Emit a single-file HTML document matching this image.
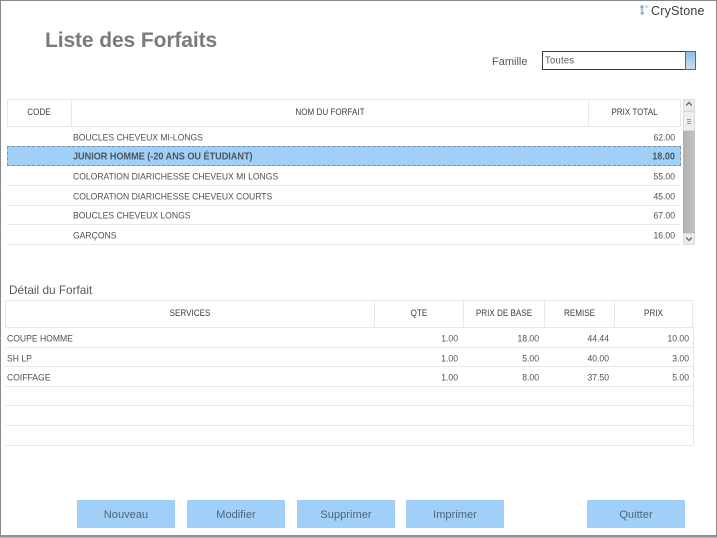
<!DOCTYPE html>
<html lang="fr"><head><meta charset="utf-8"><title>Liste des Forfaits</title>
<style>
html,body{margin:0;padding:0;background:#fff}
#p{position:relative;width:717px;height:538px;overflow:hidden;background:#fff;font-family:"Liberation Sans",sans-serif;color:#505050;filter:blur(.3px)}
#p div{position:absolute;box-sizing:border-box}
.t{white-space:nowrap;font-size:8.6px;line-height:14px;height:14px;transform:scaleY(1.1)}
.r{text-align:right}
.c{text-align:center}
.h{color:#3c3c3c;font-size:8.1px}
.l{background:#e8e8e8;height:1px}
.v{background:#e8e8e8;width:1px}
.b{background:#a0d0f8;height:28px;width:98px;top:500px;text-align:center;line-height:30px;font-size:11px;color:#4f6478;letter-spacing:.05px}
</style></head><body><div id="p">
<div style="left:0;top:0;width:717px;height:537px;border:1px solid #8a8a8a;border-bottom:2px solid #8f8f8f"></div>
<div style="left:0;top:537px;width:717px;height:1px;background:#b8b8b8"></div>

<div style="left:45px;top:28px;font-size:21px;line-height:26px;font-weight:bold;color:#7b7b7b;white-space:nowrap;letter-spacing:-.1px">Liste des Forfaits</div>

<div style="left:640px;top:5px;width:9px;height:10px">
<svg width="9" height="10" viewBox="0 0 9 10" style="display:block"><circle cx="2" cy="2" r="1.7" fill="#8fa9bd"/><circle cx="6.6" cy="1.8" r="1.4" fill="#c0d4e2"/><circle cx="2" cy="5" r="1.4" fill="#b6cbdc"/><circle cx="2.2" cy="8" r="1.6" fill="#8fa9bd"/></svg></div>
<div style="left:651px;top:4px;font-size:12.5px;line-height:15px;color:#3a3a3a;white-space:nowrap;letter-spacing:.2px">CryStone</div>

<div style="left:492px;top:55px;font-size:11px;line-height:14px;color:#555;white-space:nowrap">Famille</div>
<div style="left:542px;top:51px;width:154px;height:19px;border:1px solid #3c3c3c;background:#fff"></div>
<div class="t" style="left:545px;top:53px;color:#555;font-size:9.4px;letter-spacing:.3px">Toutes</div>
<div style="left:685px;top:51px;width:11px;height:19px;border:1px solid #566a7c;background:linear-gradient(#8dbfe6,#c4e0f5)"></div>

<!-- Table 1 -->
<div class="l" style="left:7px;top:99px;width:674px"></div>
<div class="l" style="left:7px;top:126px;width:674px"></div>
<div class="v" style="left:7px;top:99px;height:28px"></div>
<div class="v" style="left:71px;top:99px;height:28px"></div>
<div class="v" style="left:588px;top:99px;height:28px"></div>
<div class="v" style="left:680px;top:99px;height:28px"></div>
<div class="t c h" style="left:7px;top:106px;width:64px">CODE</div>
<div class="t c h" style="left:72px;top:106px;width:516px">NOM DU FORFAIT</div>
<div class="t c h" style="left:589px;top:106px;width:91px">PRIX TOTAL</div>

<div class="t" style="left:73px;top:130px">BOUCLES CHEVEUX MI-LONGS</div>
<div class="t r" style="left:600px;top:130px;width:75px">62.00</div>

<div style="left:7px;top:146px;width:674px;height:20px;background:#a0d0f8;border:1px dashed #7f8f9f"></div>
<div class="t" style="left:73px;top:149px;font-weight:bold;color:#4a5560;font-size:9.1px">JUNIOR HOMME (-20 ANS OU ÉTUDIANT)</div>
<div class="t r" style="left:600px;top:149px;width:75px;font-weight:bold;color:#4a5560;font-size:9.1px">18.00</div>

<div class="t" style="left:73px;top:169px">COLORATION DIARICHESSE CHEVEUX MI LONGS</div>
<div class="t r" style="left:600px;top:169px;width:75px">55.00</div>
<div class="l" style="left:7px;top:185px;width:674px"></div>
<div class="t" style="left:73px;top:189px">COLORATION DIARICHESSE CHEVEUX COURTS</div>
<div class="t r" style="left:600px;top:189px;width:75px">45.00</div>
<div class="l" style="left:7px;top:205px;width:674px"></div>
<div class="t" style="left:73px;top:208px">BOUCLES CHEVEUX LONGS</div>
<div class="t r" style="left:600px;top:208px;width:75px">67.00</div>
<div class="l" style="left:7px;top:224px;width:674px"></div>
<div class="t" style="left:73px;top:228px">GARÇONS</div>
<div class="t r" style="left:600px;top:228px;width:75px">16.00</div>
<div class="l" style="left:7px;top:244px;width:674px"></div>

<!-- Scrollbar -->
<div style="left:683px;top:99px;width:12px;height:146px;background:linear-gradient(90deg,#b0b0b0,#c4c4c4)"></div>
<div style="left:683px;top:99px;width:12px;height:12px;background:#ebebeb;border:1px solid #dcdcdc"></div>
<div style="left:683px;top:111px;width:12px;height:20px;background:#eeeeee;border:1px solid #dcdcdc"></div>
<div style="left:683px;top:233px;width:12px;height:12px;background:#ebebeb;border:1px solid #dcdcdc"></div>
<div style="left:686px;top:101px"><svg width="6" height="6" viewBox="0 0 6 6" style="display:block"><path d="M0 4.5 3 1.5 6 4.5" fill="none" stroke="#666" stroke-width="1.3"/></svg></div>
<div style="left:686px;top:236px"><svg width="6" height="6" viewBox="0 0 6 6" style="display:block"><path d="M0 1.5 3 4.5 6 1.5" fill="none" stroke="#666" stroke-width="1.3"/></svg></div>
<div style="left:687px;top:119px;width:4px;height:5px;border-top:1px solid #999;border-bottom:1px solid #999"></div>
<div style="left:687px;top:121px;width:4px;height:1px;background:#999"></div>

<div style="left:9px;top:283px;font-size:11.8px;line-height:14px;color:#595959;white-space:nowrap">Détail du Forfait</div>

<!-- Table 2 -->
<div class="l" style="left:5px;top:300px;width:687px"></div>
<div class="l" style="left:5px;top:327px;width:689px"></div>
<div class="v" style="left:5px;top:300px;height:28px"></div>
<div class="v" style="left:374px;top:300px;height:28px"></div>
<div class="v" style="left:463px;top:300px;height:28px"></div>
<div class="v" style="left:544px;top:300px;height:28px"></div>
<div class="v" style="left:614px;top:300px;height:28px"></div>
<div class="v" style="left:692px;top:300px;height:28px"></div>
<div style="left:693px;top:327px;width:1px;height:119px;background:#e4e4e4"></div>
<div class="t c h" style="left:6px;top:307px;width:368px">SERVICES</div>
<div class="t c h" style="left:375px;top:307px;width:88px">QTE</div>
<div class="t c h" style="left:464px;top:307px;width:80px">PRIX DE BASE</div>
<div class="t c h" style="left:545px;top:307px;width:69px">REMISE</div>
<div class="t c h" style="left:615px;top:307px;width:77px">PRIX</div>

<div class="t" style="left:7px;top:331px">COUPE HOMME</div>
<div class="t r" style="left:400px;top:331px;width:58px">1.00</div>
<div class="t r" style="left:480px;top:331px;width:59px">18.00</div>
<div class="t r" style="left:550px;top:331px;width:59px">44.44</div>
<div class="t r" style="left:630px;top:331px;width:59px">10.00</div>
<div class="l" style="left:5px;top:347px;width:689px"></div>
<div class="t" style="left:7px;top:351px">SH LP</div>
<div class="t r" style="left:400px;top:351px;width:58px">1.00</div>
<div class="t r" style="left:480px;top:351px;width:59px">5.00</div>
<div class="t r" style="left:550px;top:351px;width:59px">40.00</div>
<div class="t r" style="left:630px;top:351px;width:59px">3.00</div>
<div class="l" style="left:5px;top:366px;width:689px"></div>
<div class="t" style="left:7px;top:370px">COIFFAGE</div>
<div class="t r" style="left:400px;top:370px;width:58px">1.00</div>
<div class="t r" style="left:480px;top:370px;width:59px">8.00</div>
<div class="t r" style="left:550px;top:370px;width:59px">37.50</div>
<div class="t r" style="left:630px;top:370px;width:59px">5.00</div>
<div class="l" style="left:5px;top:386px;width:689px"></div>
<div class="l" style="left:5px;top:405px;width:689px"></div>
<div class="l" style="left:5px;top:425px;width:689px"></div>
<div class="l" style="left:5px;top:445px;width:689px"></div>

<!-- Buttons -->
<div class="b" style="left:77px">Nouveau</div>
<div class="b" style="left:187px">Modifier</div>
<div class="b" style="left:297px">Supprimer</div>
<div class="b" style="left:406px">Imprimer</div>
<div class="b" style="left:587px">Quitter</div>
</div></body></html>
